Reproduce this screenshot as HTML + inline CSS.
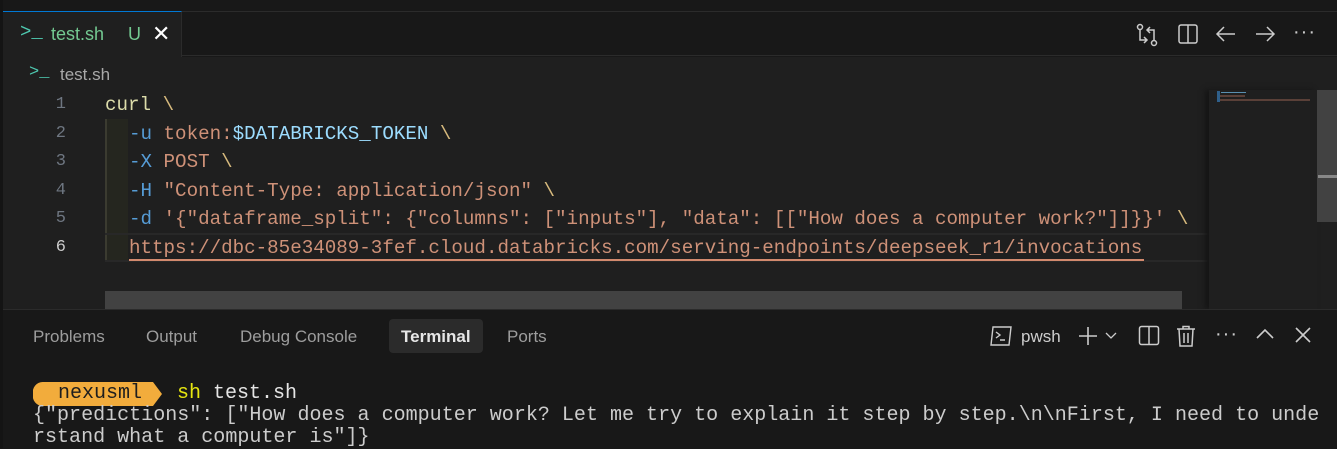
<!DOCTYPE html>
<html><head><meta charset="utf-8"><style>
*{margin:0;padding:0;box-sizing:border-box}
body{width:1337px;height:448px;background:#181818;overflow:hidden;position:relative;font-family:"Liberation Sans",sans-serif}
.abs{position:absolute}
.mono{font-family:"Liberation Mono",monospace;white-space:pre}
.code{font-size:19.2px;line-height:28.5px;color:#d4d4d4}
.ln{position:absolute;left:40px;width:26px;text-align:right;font-family:"Liberation Mono",monospace;font-size:17px;color:#6e7681;line-height:28.5px}
.k{color:#dcdcaa}.b{color:#569cd6}.o{color:#ce9178}.v{color:#9cdcfe}.bs{color:#d7ba7d}
.tab{position:absolute;top:327px;font-size:17px;color:#9d9d9d}
svg{position:absolute}
</style></head><body>
<div class="abs" style="left:0;top:0;width:3px;height:448px;background:#141414"></div>
<div class="abs" style="left:3px;top:11px;width:1334px;height:45px;background:#181818;border-top:1px solid #2b2b2b;border-bottom:1px solid #2b2b2b"></div>
<div class="abs" style="left:3px;top:11px;width:179px;height:46px;background:#1f1f1f;border-top:1px solid #0078d4;border-right:1px solid #2b2b2b"></div>
<div class="abs" style="left:20px;top:21px;color:#4ec9b0;font-size:19px;font-family:'Liberation Mono',monospace">&gt;_</div>
<div class="abs" style="left:51px;top:24px;color:#73c991;font-size:18px">test.sh</div>
<div class="abs" style="left:128px;top:24px;color:#73c991;font-size:18px">U</div>
<div class="abs" style="left:152px;top:21px;color:#fff;font-size:22px">✕</div>
<svg style="left:1134px;top:22px" width="28" height="26" viewBox="0 0 28 26" fill="none" stroke="#ccc" stroke-width="1.5"><circle cx="6" cy="5" r="2.5"/><path d="M6 8v10h6M10 15l3 3-3 3"/><circle cx="20" cy="21" r="2.5"/><path d="M20 18V8h-6M16 5l-3 3 3 3"/></svg>
<svg style="left:1177px;top:23px" width="22" height="22" viewBox="0 0 22 22" fill="none" stroke="#ccc" stroke-width="1.5"><rect x="2" y="2" width="18" height="18" rx="2"/><path d="M11 2v18"/></svg>
<svg style="left:1214px;top:23px" width="24" height="22" viewBox="0 0 24 22" fill="none" stroke="#ccc" stroke-width="1.5"><path d="M21 11H3M10 4l-7 7 7 7"/></svg>
<svg style="left:1253px;top:23px" width="24" height="22" viewBox="0 0 24 22" fill="none" stroke="#ccc" stroke-width="1.5"><path d="M3 11h18M14 4l7 7-7 7"/></svg>
<div class="abs" style="left:1293px;top:21px;color:#ccc;font-size:20px;letter-spacing:1px">···</div>
<div class="abs" style="left:3px;top:57px;width:1334px;height:252px;background:#1f1f1f"></div>
<div class="abs" style="left:29px;top:63px;color:#4ec9b0;font-size:17px;font-family:'Liberation Mono',monospace">&gt;_</div>
<div class="abs" style="left:60px;top:65px;color:#a9a9a9;font-size:17px">test.sh</div>
<div class="abs" style="left:105px;top:119px;width:23px;height:143px;background:#25261f;border-left:2px solid #3b3b30"></div>
<div class="abs" style="left:105px;top:233px;width:1104px;height:29px;border-top:2px solid #282828;border-bottom:2px solid #282828"></div>
<div class="ln" style="top:91px">1</div><div class="ln" style="top:120px">2</div><div class="ln" style="top:148px">3</div><div class="ln" style="top:177px">4</div><div class="ln" style="top:205px">5</div><div class="ln" style="top:234px;color:#ccc">6</div>
<div class="abs mono code" style="left:105px;top:91px"><span class="k">curl</span> <span class="bs">\</span></div>
<div class="abs mono code" style="left:129px;top:120px"><span class="b">-u</span> <span class="o">token:</span><span class="v">$DATABRICKS_TOKEN</span> <span class="bs">\</span></div>
<div class="abs mono code" style="left:129px;top:148px"><span class="b">-X</span> <span class="o">POST</span> <span class="bs">\</span></div>
<div class="abs mono code" style="left:129px;top:177px"><span class="b">-H</span> <span class="o">"Content-Type: application/json"</span> <span class="bs">\</span></div>
<div class="abs mono code" style="left:129px;top:205px"><span class="b">-d</span> <span class="o">'{"dataframe_split": {"columns": ["inputs"], "data": [["How does a computer work?"]]}}'</span> <span class="bs">\</span></div>
<div class="abs mono code" style="left:129px;top:234px"><span class="o">https://dbc-85e34089-3fef.cloud.databricks.com/serving-endpoints/deepseek_r1/invocations</span></div>
<div class="abs" style="left:129px;top:259px;width:1015px;height:2px;background:#d38a6e"></div>
<div class="abs" style="left:105px;top:291px;width:1077px;height:18px;background:#424242"></div>
<div class="abs" style="left:1209px;top:90px;width:108px;height:219px;background:#1f1f1f;box-shadow:-4px 0 5px #151515"></div>
<div class="abs" style="left:1217px;top:91px;width:3px;height:11px;background:#2f5f8a"></div>
<div class="abs" style="left:1221px;top:92px;width:25px;height:1px;background:#5a8fb0"></div>
<div class="abs" style="left:1220px;top:95px;width:25px;height:2px;background:#5a4038"></div>
<div class="abs" style="left:1220px;top:99px;width:90px;height:2px;background:#5a4038"></div>
<div class="abs" style="left:1317px;top:90px;width:20px;height:132px;background:#424242"></div>
<div class="abs" style="left:1318px;top:175px;width:19px;height:3px;background:#888"></div>
<div class="abs" style="left:3px;top:309px;width:1334px;height:139px;background:#181818;border-top:1px solid #2b2b2b"></div>
<div class="tab" style="left:33px">Problems</div>
<div class="tab" style="left:146px">Output</div>
<div class="tab" style="left:240px">Debug Console</div>
<div class="abs" style="left:389px;top:319px;width:94px;height:34px;background:#2b2b2b;border-radius:4px"></div>
<div class="tab" style="left:401px;color:#e7e7e7;font-weight:bold">Terminal</div>
<div class="tab" style="left:507px">Ports</div>
<svg style="left:989px;top:325px" width="24" height="22" viewBox="0 0 24 22" fill="none" stroke="#ccc" stroke-width="1.4"><path d="M4 2h18l-2 18H2z"/><path d="M7 7l4 3-4 3M11 15h5"/></svg>
<div class="abs" style="left:1021px;top:327px;color:#ccc;font-size:17px">pwsh</div>
<svg style="left:1077px;top:325px" width="22" height="22" viewBox="0 0 22 22" fill="none" stroke="#ccc" stroke-width="1.6"><path d="M11 2v18M2 11h18"/></svg>
<svg style="left:1105px;top:331px" width="12" height="10" viewBox="0 0 12 10" fill="none" stroke="#ccc" stroke-width="1.3"><path d="M1 2l5 5 5-5"/></svg>
<svg style="left:1138px;top:325px" width="22" height="22" viewBox="0 0 22 22" fill="none" stroke="#ccc" stroke-width="1.5"><rect x="1.5" y="1.5" width="19" height="18" rx="2"/><path d="M11 2v18"/></svg>
<svg style="left:1176px;top:325px" width="20" height="22" viewBox="0 0 20 22" fill="none" stroke="#ccc" stroke-width="1.5"><path d="M1 4h18M7 4V1.5h6V4M3 4l1 17h12l1-17M8 8v10M12 8v10"/></svg>
<div class="abs" style="left:1215px;top:323px;color:#ccc;font-size:20px;letter-spacing:1px">···</div>
<svg style="left:1255px;top:327px" width="20" height="14" viewBox="0 0 20 14" fill="none" stroke="#ccc" stroke-width="1.6"><path d="M2 11l8-8 8 8"/></svg>
<svg style="left:1294px;top:326px" width="18" height="18" viewBox="0 0 18 18" fill="none" stroke="#ccc" stroke-width="1.6"><path d="M2 2l14 14M16 2L2 16"/></svg>
<svg style="left:33px;top:382px" width="130" height="24" viewBox="0 0 130 24"><path d="M10 0H120L129 12L120 24H10A10 10 0 0 1 0 12A10 10 0 0 1 10 0z" fill="#f2ac3c"/></svg>
<div class="abs mono" style="left:58px;top:383px;font-size:20px;line-height:22px;color:#1e1e1e">nexusml</div>
<div class="abs mono" style="left:177px;top:383px;font-size:20px;line-height:22px;color:#e5e510">sh <span style="color:#e5e5e5">test.sh</span></div>
<div class="abs mono" style="left:33px;top:405px;font-size:20.05px;line-height:22px;color:#cccccc">{"predictions": ["How does a computer work? Let me try to explain it step by step.\n\nFirst, I need to unde
rstand what a computer is"]}</div>
</body></html>
